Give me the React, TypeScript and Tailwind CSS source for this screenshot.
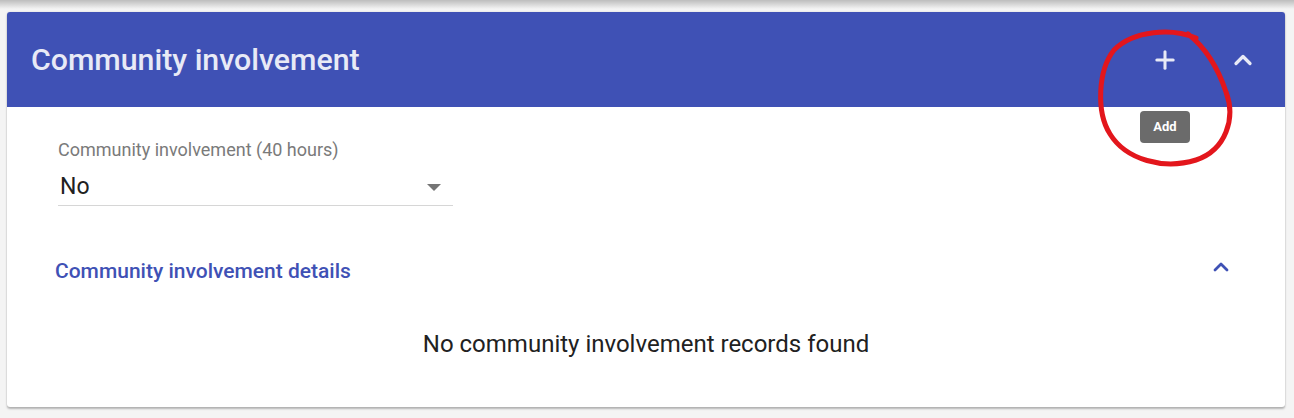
import { ChevronUp, Plus } from 'lucide-react';

export default function App() {
  return (
    <div
      className="relative w-[1294px] h-[418px] overflow-hidden bg-[#f4f4f4]"
      style={{ fontFamily: 'Roboto, "Liberation Sans", sans-serif' }}
    >
      {/* shadow left by the card above */}
      <div className="h-[9px] bg-gradient-to-b from-[#bdbdbd] to-[#f4f4f4]" />

      <div className="mx-[7px] mt-[3px] w-[1278px] bg-white rounded-[3px] shadow-[0_2px_2px_rgba(0,0,0,0.25),0_0_2px_rgba(0,0,0,0.12)]">
        {/* Header */}
        <div className="h-[95px] bg-[#3f51b5] rounded-t-[3px] flex items-center pl-[24px] pr-[22px]">
          <h1 className="text-[30.3px] font-medium text-[#e8eaf6] flex-1">
            Community involvement
          </h1>
          <button className="w-[40px] h-[40px] flex items-center justify-center text-[#e8eaf6] mr-[38px]">
            <Plus size={28} strokeWidth={2.6} />
          </button>
          <button className="w-[40px] h-[40px] flex items-center justify-center text-[#e8eaf6]">
            <ChevronUp size={28} strokeWidth={2.8} />
          </button>
        </div>

        {/* Body */}
        <div className="px-[48px] pt-[32px] pb-[47px]">
          <div className="ml-[3px] w-[395px]">
            <div className="text-[18px] text-[#7a7a7a] leading-[22px]">
              Community involvement (40 hours)
            </div>
            <div className="flex items-center h-[37px] border-b border-[#d6d6d6] mt-[8px]">
              <span className="flex-1 pl-[2px] text-[23px] text-[#212121]">No</span>
              <svg width="14" height="7" viewBox="0 0 14 7" className="mr-[12px]">
                <path d="M0 0 L14 0 L7 7 Z" fill="#757575" />
              </svg>
            </div>
          </div>

          <div className="flex items-center justify-between mt-[51px] pr-[4px] h-[28px]">
            <h2 className="text-[21px] font-medium text-[#3f51b5] leading-[28px]">
              Community involvement details
            </h2>
            <ChevronUp size={24} strokeWidth={2.8} className="text-[#3f51b5] -mt-[8px]" />
          </div>

          <p className="mt-[43px] text-center text-[24px] leading-[32px] text-[#212121]">
            No community involvement records found
          </p>
        </div>
      </div>

      {/* Tooltip */}
      <div className="absolute left-[1140px] top-[111px] w-[50px] h-[32px] rounded-[4px] bg-[#6b6b6b] text-white text-[13px] font-bold flex items-center justify-center">
        Add
      </div>

      {/* Red hand-drawn annotation */}
      <svg
        className="absolute left-0 top-0 pointer-events-none"
        width="1294"
        height="418"
        viewBox="0 0 1294 418"
      >
        <path
          d="M1196 38 C1172 28 1134 30 1114 50 C1098 70 1096 112 1110 134 C1126 160 1164 170 1196 160 C1226 150 1236 118 1226 92 C1218 68 1206 48 1188 34"
          fill="none"
          stroke="#e3161c"
          strokeWidth="5"
          strokeLinecap="round"
        />
      </svg>
    </div>
  );
}
